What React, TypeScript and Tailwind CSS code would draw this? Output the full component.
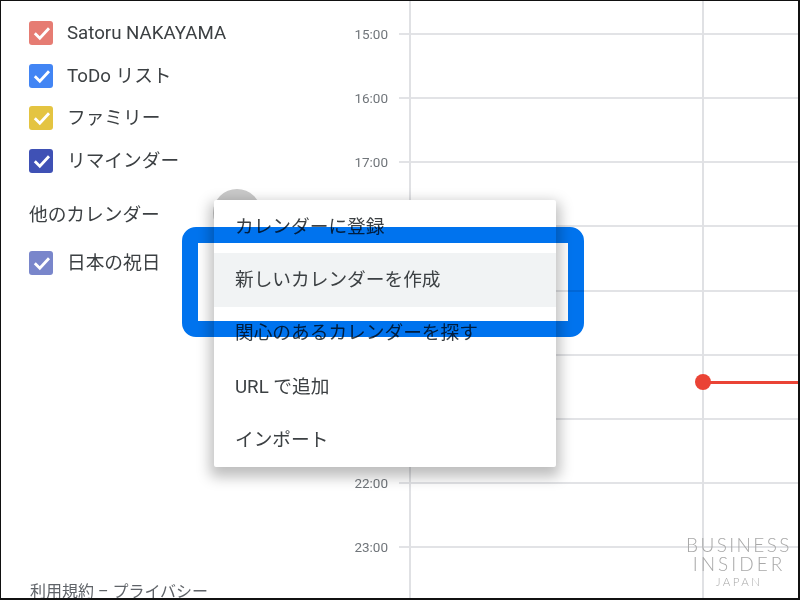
import React from 'react'

const font = { fontFamily: '"Roboto", "Noto Sans CJK JP", sans-serif' }

const calendars = [
  { name: 'Satoru NAKAYAMA', color: 'bg-[#e67c73]' },
  { name: 'ToDo リスト', color: 'bg-[#4285f4]' },
  { name: 'ファミリー', color: 'bg-[#e4c441]' },
  { name: 'リマインダー', color: 'bg-[#3f51b5]' },
]

const hours = ['15:00', '16:00', '17:00', '', '', '', '', '22:00', '23:00']

const menuItems = ['カレンダーに登録', '新しいカレンダーを作成', '関心のあるカレンダーを探す', 'URL で追加', 'インポート']

function CalendarRow({ name, color }: { name: string; color: string }) {
  return (
    <div className="flex items-center h-[42.6px]">
      <span className={`flex items-center justify-center w-6 h-6 rounded-[3px] ${color}`}>
        <svg width="24" height="24" viewBox="0 0 24 24" fill="none">
          <path d="M5.8 12.2 L10.8 17.2 L20 7.2" stroke="white" strokeWidth="2.8" />
        </svg>
      </span>
      <span className="ml-[14px] text-[18.7px] text-[#3c4043]">{name}</span>
    </div>
  )
}

export default function App() {
  return (
    <div
      className="relative w-[800px] h-[600px] flex overflow-hidden bg-white border-t border-l border-r-2 border-b-2 border-[#111]"
      style={font}
    >
      <aside className="w-[344px] h-full flex flex-col pl-[28px] pt-[11px]">
        {calendars.map((c) => (
          <CalendarRow key={c.name} name={c.name} color={c.color} />
        ))}
        <div className="mt-[19px] mb-[12px] text-[18.7px] leading-[28px] text-[#3c4043]">他のカレンダー</div>
        <CalendarRow name="日本の祝日" color="bg-[#7986cb]" />
        <div className="mt-auto -mb-[6px] ml-px text-[16px] leading-[24px] text-[#5f6368]">利用規約 – プライバシー</div>
      </aside>

      <section className="relative flex-1 flex flex-col pt-[0.8px]">
        {hours.map((h, i) => (
          <div key={i} className="flex items-center h-[64.2px]">
            <span className="w-[43px] text-right text-[13.5px] text-[#70757a]">{h}</span>
            <span className="ml-[11px] flex-1 h-[2px] bg-[#e2e3e6]" />
          </div>
        ))}
        <div className="absolute top-0 bottom-0 left-[64px] w-[2px] bg-[#e0e1e4]" />
        <div className="absolute top-0 bottom-0 left-[357px] w-[2px] bg-[#e0e1e4]" />
      </section>

      {/* now marker */}
      <div className="absolute left-[694px] top-[373px] right-0 flex items-center">
        <span className="w-4 h-4 rounded-full bg-[#ea4335]" />
        <span className="flex-1 h-[3px] -ml-px bg-[#ea4335]" />
      </div>

      {/* button under the menu */}
      <div className="absolute left-[212px] top-[188px] w-12 h-12 rounded-full bg-[#c9c9c9]" />

      <div className="absolute left-[213px] top-[199px] w-[342px] h-[267px] bg-white rounded-[2px] shadow-[0_6px_14px_4px_rgba(0,0,0,0.26)] text-[18.7px] text-[#3c4043]">
        {menuItems.map((item, i) => (
          <div key={item} className={`flex items-center h-[53.4px] pl-[21px] ${i === 1 ? 'bg-[#f1f3f4]' : ''}`}>
            {item}
          </div>
        ))}
      </div>

      {/* blue highlight frame */}
      <div className="absolute left-[181px] top-[226px] w-[402px] h-[110px] border-[16px] border-[#0073ee] rounded-[14px] mix-blend-multiply" />

      {/* watermark */}
      <div className="absolute left-[680px] top-[534px] w-[116px] flex flex-col items-center text-[#a8a8a8] font-light" style={{ fontFamily: 'Lato, sans-serif' }}>
        <span className="text-[19px] leading-[19px] tracking-[2.4px]">BUSINESS</span>
        <span className="text-[19px] leading-[19px] tracking-[3px]">INSIDER</span>
        <span className="text-[11.5px] leading-[17px] tracking-[2.4px]">JAPAN</span>
      </div>
    </div>
  )
}
